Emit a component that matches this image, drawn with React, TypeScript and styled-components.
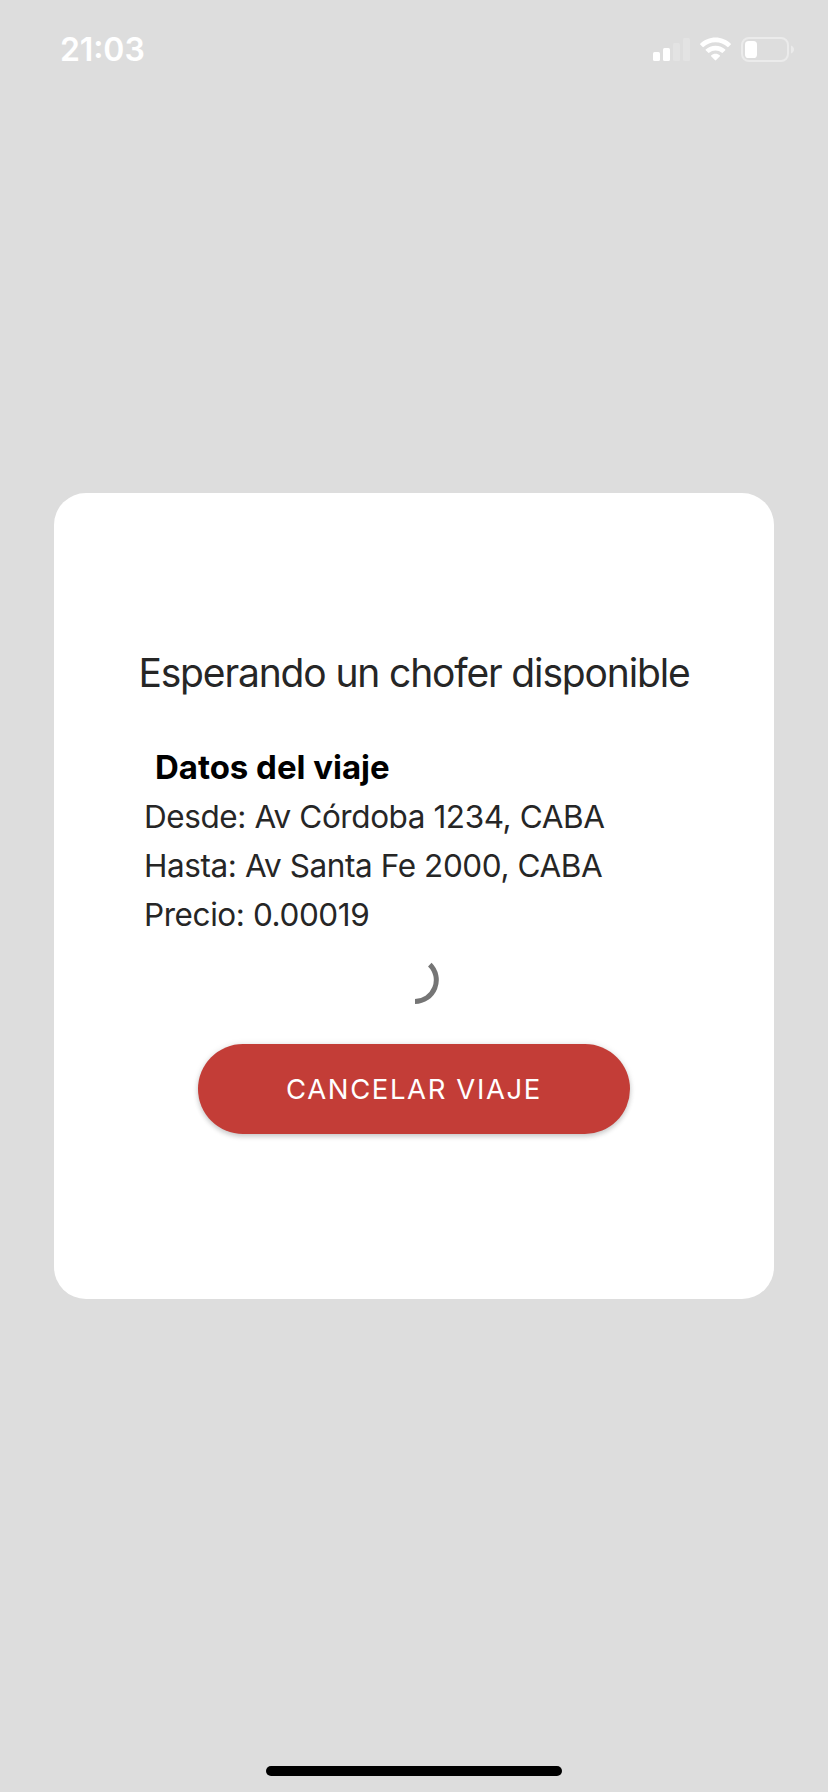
import React from "react";
import styled, { createGlobalStyle } from "styled-components";

const GlobalStyle = createGlobalStyle`
  *, *::before, *::after { box-sizing: border-box; }
  body {
    margin: 0;
    background: #dddddd;
    font-family: Inter, "Liberation Sans", sans-serif;
  }
`;

const Screen = styled.div`
  width: 828px;
  height: 1792px;
  display: flex;
  flex-direction: column;
  background: #dddddd;
  overflow: hidden;
`;

const StatusBar = styled.header`
  height: 88px;
  flex: none;
  display: flex;
  justify-content: space-between;
  align-items: flex-start;
  padding: 30px 34px 0 60px;
`;

const Clock = styled.time`
  font-size: 32px;
  line-height: 39px;
  font-weight: 600;
  letter-spacing: -0.1px;
  font-feature-settings: "case";
  color: #fff;
`;

const StatusIcons = styled.div`
  display: flex;
  align-items: center;
  gap: 10px;
  margin-top: 7px;

  svg { display: block; }
`;

const Main = styled.main`
  flex: 1;
  display: flex;
  align-items: center;
  justify-content: center;
`;

const Card = styled.section`
  width: 720px;
  height: 806px;
  border-radius: 32px;
  background: #fff;
  display: flex;
  flex-direction: column;
  align-items: center;
  padding-top: 156px;
`;

const Title = styled.h1`
  margin: 0;
  font-size: 39px;
  line-height: 48px;
  font-weight: 400;
  letter-spacing: -1.15px;
  color: #262626;
  white-space: nowrap;
`;

const TripDetails = styled.div`
  align-self: stretch;
  margin-top: 47px;
  padding-left: 90px;
`;

const DetailsHeading = styled.h2`
  margin: 0 0 2px 11px;
  font-size: 33px;
  line-height: 46px;
  font-weight: 700;
  letter-spacing: -0.03px;
  color: #000;
`;

const DetailRow = styled.p`
  margin: 0;
  font-size: 31.5px;
  line-height: 49px;
  letter-spacing: -0.42px;
  color: #262626;
  white-space: nowrap;
`;

const Spinner = styled.svg`
  display: block;
  margin-top: 16px;
`;

const CancelButton = styled.button`
  width: 432px;
  height: 90px;
  margin-top: 39px;
  padding: 0;
  border: 0;
  border-radius: 45px;
  background: #c33d37;
  box-shadow: 0 3px 5px rgba(0, 0, 0, 0.16), 0 0 6px rgba(0, 0, 0, 0.1);
  color: #fff;
  font-family: inherit;
  font-size: 27.5px;
  line-height: 36px;
  font-weight: 400;
  letter-spacing: 1.6px;
  text-transform: uppercase;
`;

const HomeArea = styled.footer`
  height: 88px;
  flex: none;
  display: flex;
  justify-content: center;
  align-items: flex-end;
  padding-bottom: 16px;
`;

const HomeIndicator = styled.div`
  width: 296px;
  height: 10px;
  border-radius: 5px;
  background: #000;
`;

const SignalIcon = () => (
  <svg width="37" height="25" viewBox="0 0 37 25">
    <rect x="0" y="15" width="7" height="9" rx="1.6" fill="#fff" />
    <rect x="10" y="11" width="7" height="13" rx="1.6" fill="#fff" />
    <rect x="20" y="6" width="7" height="18" rx="1.6" fill="#e3e3e3" />
    <rect x="30" y="1" width="7" height="23" rx="1.6" fill="#e3e3e3" />
  </svg>
);

const WifiIcon = () => (
  <svg width="31" height="25" viewBox="0 0 31 25" fill="#fff">
    <path d="M15.5 0.6C21.4 0.6 26.8 2.9 30.8 6.7Q31.1 7.1 30.8 7.5L28.3 10Q27.9 10.3 27.5 10A17.4 17.4 0 0 0 3.5 10Q3.1 10.3 2.7 10L0.2 7.5Q-0.1 7.1 0.2 6.7C4.2 2.9 9.6 0.6 15.5 0.6Z" />
    <path d="M15.5 8.8C19.3 8.8 22.7 10.2 25.3 12.5Q25.7 12.9 25.3 13.3L22.7 15.8Q22.3 16.1 21.9 15.8A9.7 9.7 0 0 0 9.1 15.8Q8.7 16.1 8.3 15.8L5.7 13.3Q5.3 12.9 5.7 12.5C8.3 10.2 11.7 8.8 15.5 8.8Z" />
    <path d="M15.5 16.8C17.3 16.8 18.7 17.4 19.9 18.4Q20.3 18.8 19.9 19.2L15.9 23.3Q15.5 23.6 15.1 23.3L11.1 19.2Q10.7 18.8 11.1 18.4C12.3 17.4 13.7 16.8 15.5 16.8Z" />
  </svg>
);

const BatteryIcon = () => (
  <svg width="53" height="25" viewBox="0 0 53 25">
    <rect x="1" y="1" width="46" height="23" rx="7" fill="none" stroke="#ebebeb" strokeWidth="2" />
    <path d="M50 8.5C52 9.4 53 10.8 53 12.5S52 15.6 50 16.5Z" fill="#ebebeb" />
    <rect x="4" y="4" width="12" height="17" rx="3.6" fill="#fff" />
  </svg>
);

const trip = [
  { label: "Desde", value: "Av Córdoba 1234, CABA" },
  { label: "Hasta", value: "Av Santa Fe 2000, CABA" },
  { label: "Precio", value: "0.00019" },
];

export default function App() {
  return (
    <>
      <GlobalStyle />
      <Screen>
        <StatusBar>
          <Clock>21:03</Clock>
          <StatusIcons>
            <SignalIcon />
            <WifiIcon />
            <BatteryIcon />
          </StatusIcons>
        </StatusBar>
        <Main>
          <Card>
            <Title>Esperando un chofer disponible</Title>
            <TripDetails>
              <DetailsHeading>Datos del viaje</DetailsHeading>
              {trip.map((row) => (
                <DetailRow key={row.label}>
                  {row.label}: {row.value}
                </DetailRow>
              ))}
            </TripDetails>
            <Spinner width="50" height="50" viewBox="0 0 50 50">
              <path d="M40.8 9.6A21.5 21.5 0 0 1 26 46.5" fill="none" stroke="#757575" strokeWidth="5" />
            </Spinner>
            <CancelButton>Cancelar viaje</CancelButton>
          </Card>
        </Main>
        <HomeArea>
          <HomeIndicator />
        </HomeArea>
      </Screen>
    </>
  );
}
